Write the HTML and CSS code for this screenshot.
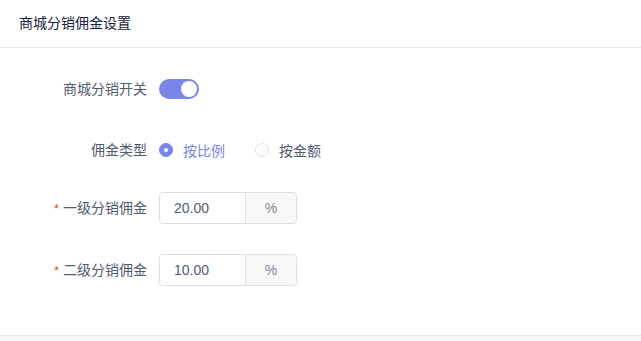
FILE: index.html
```html
<!DOCTYPE html>
<html lang="zh-CN">
<head>
    <meta charset="UTF-8">
    <title>商城分销佣金设置</title>
    <link rel="stylesheet" href="styles.css">
</head>
<body>
    <div class="card">
        <div class="card-head">商城分销佣金设置</div>
        <div class="card-body">
            <div class="form-item item-switch">
                <label class="form-label">商城分销开关</label>
                <div class="form-control">
                    <span class="switch on"><span class="switch-knob"></span></span>
                </div>
            </div>
            <div class="form-item item-radio">
                <label class="form-label">佣金类型</label>
                <div class="form-control">
                    <label class="radio checked"><span class="radio-dot"></span>按比例</label>
                    <label class="radio"><span class="radio-dot"></span>按金额</label>
                </div>
            </div>
            <div class="form-item item-first">
                <label class="form-label required">一级分销佣金</label>
                <div class="form-control">
                    <div class="input-group">
                        <input class="input" type="text" value="20.00">
                        <span class="input-append">%</span>
                    </div>
                </div>
            </div>
            <div class="form-item">
                <label class="form-label required">二级分销佣金</label>
                <div class="form-control">
                    <div class="input-group">
                        <input class="input" type="text" value="10.00">
                        <span class="input-append">%</span>
                    </div>
                </div>
            </div>
        </div>
    </div>
</body>
</html>
```

FILE: styles.css
```css
body {
    margin: 0;
    background-color: #f5f7f9;
    font-family: "Liberation Sans", "Noto Sans CJK SC", sans-serif;
    font-size: 14px;
    color: #515a6e;
}
.card {
    background-color: #fff;
    height: 335px;
    border-bottom: 1px solid #e8eaec;
}
.card-head {
    height: 48px;
    line-height: 46px;
    padding-left: 19px;
    border-bottom: 1px solid #e8eaec;
    color: #17233d;
    box-sizing: border-box;
}
.card-body {
    padding-top: 25px;
}
.form-item {
    display: flex;
    align-items: center;
    height: 32px;
    margin-bottom: 30px;
}
.item-switch {
    margin-bottom: 29px;
}
.item-radio {
    margin-bottom: 26px;
}
.form-label {
    width: 147px;
    padding-right: 12px;
    text-align: right;
    line-height: 32px;
}
.form-label.required::before {
    content: "*";
    color: #ed4014;
    margin-right: 4px;
    font-family: "Liberation Sans", sans-serif;
    font-size: 12px;
}
.form-control {
    display: flex;
    align-items: center;
}
.switch {
    position: relative;
    display: inline-block;
    width: 40px;
    height: 20px;
    border-radius: 10px;
    background-color: #ccc;
}
.switch.on {
    background-color: #7985e8;
}
.switch-knob {
    position: absolute;
    top: 2px;
    left: 2px;
    width: 16px;
    height: 16px;
    border-radius: 50%;
    background-color: #fff;
}
.switch.on .switch-knob {
    left: 22px;
}
.radio {
    display: flex;
    align-items: center;
    margin-right: 30px;
    color: #515a6e;
    cursor: pointer;
}
.radio-dot {
    width: 12px;
    height: 12px;
    border: 1px solid #dcdee2;
    border-radius: 50%;
    margin-right: 10px;
    position: relative;
    background-color: #fff;
}
.radio.checked {
    color: #7985e8;
}
.radio.checked .radio-dot {
    border-color: #7985e8;
    background-color: #7985e8;
}
.radio.checked .radio-dot::after {
    content: "";
    position: absolute;
    top: 4px;
    left: 4px;
    width: 4px;
    height: 4px;
    border-radius: 50%;
    background-color: #fff;
}
.input-group {
    display: flex;
    width: 138px;
    height: 32px;
    border: 1px solid #dcdee2;
    border-radius: 4px;
    box-sizing: border-box;
    overflow: hidden;
}
.input {
    width: 86px;
    border: none;
    outline: none;
    padding: 0 0 0 14px;
    box-sizing: border-box;
    font-family: "Liberation Sans", sans-serif;
    font-size: 14px;
    color: #515a6e;
    border-right: 1px solid #dcdee2;
}
.input-append {
    flex: 1;
    text-align: center;
    line-height: 30px;
    background-color: #f8f8f9;
    color: #808695;
}
```
